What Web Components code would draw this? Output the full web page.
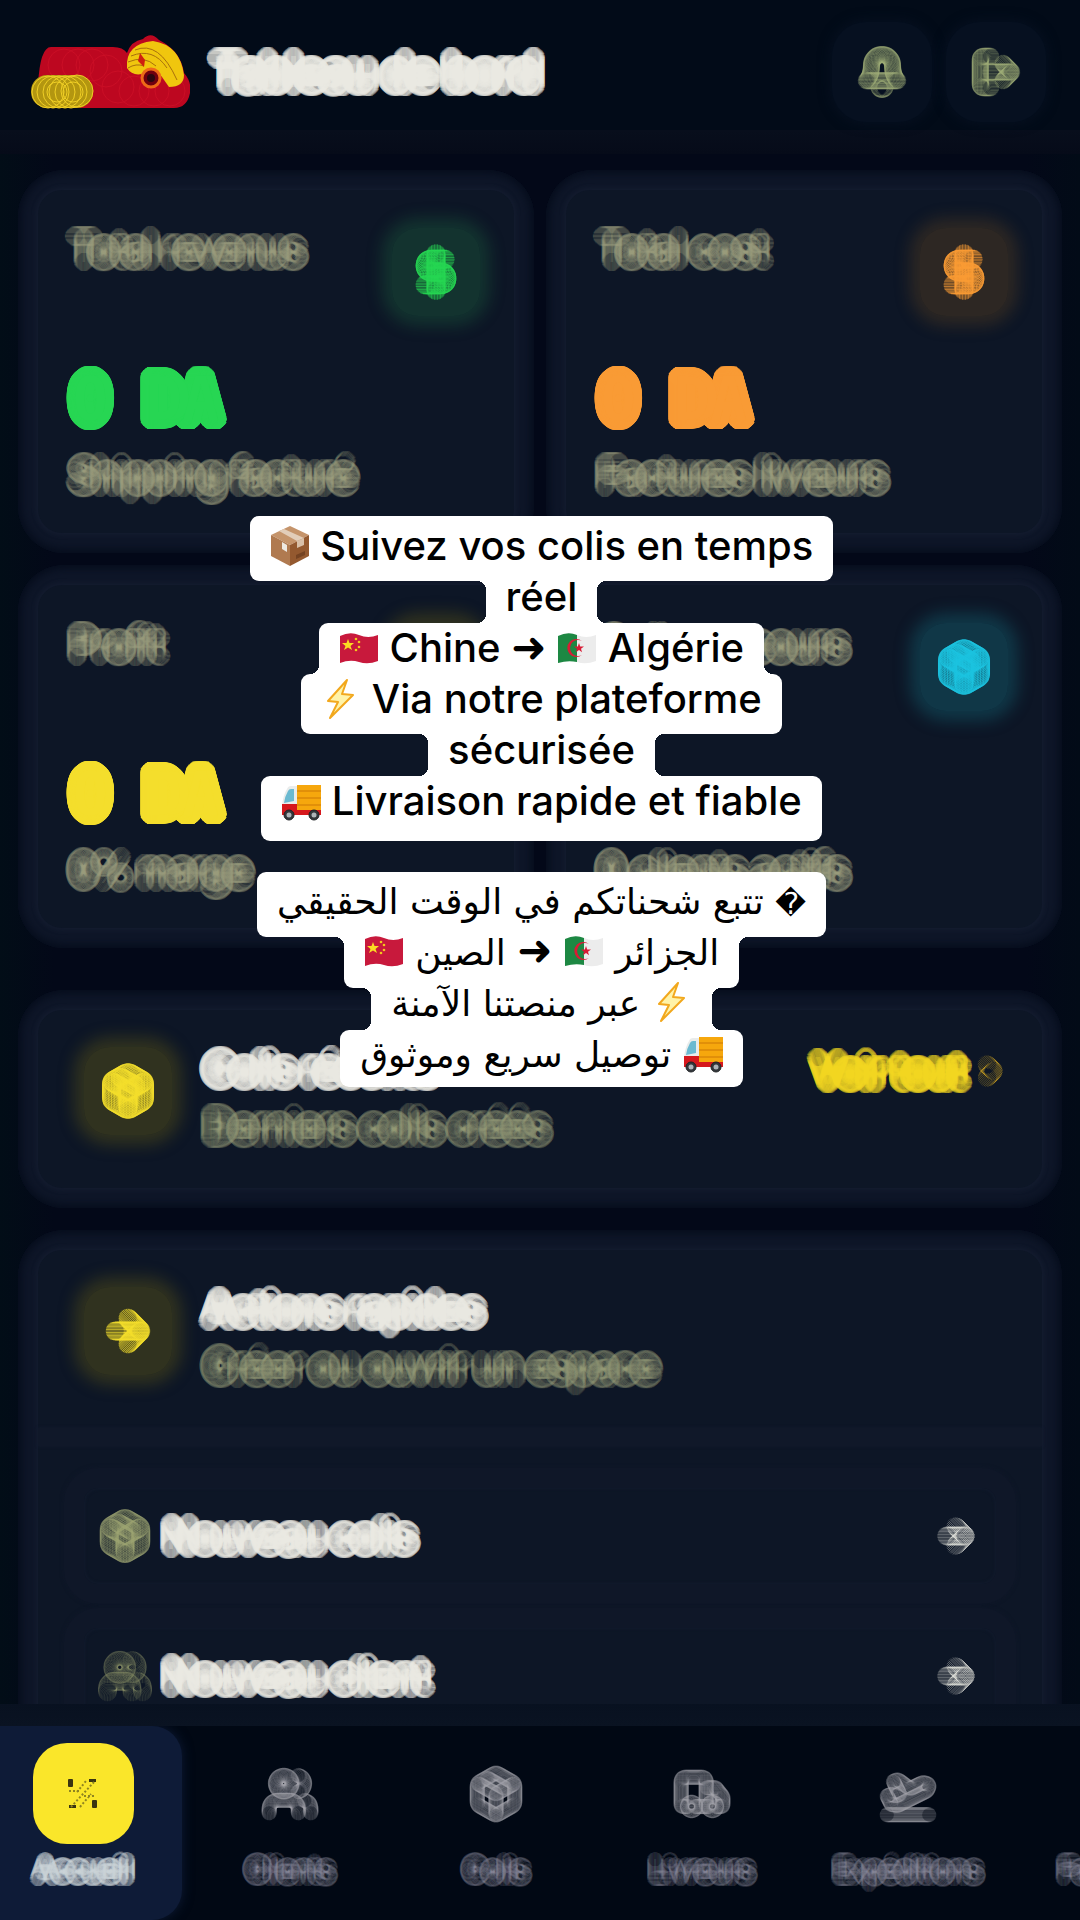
<!DOCTYPE html>
<html lang="fr">
<head>
<meta charset="utf-8">
<meta name="viewport" content="width=device-width, initial-scale=1">
<title>Tableau de bord</title>
<style>
  html, body { margin: 0; height: 100%; }
  body { background: #020a17; font-family: Inter, "Noto Sans", sans-serif; overflow: hidden; }
</style>
</head>
<body>
<dash-app></dash-app>
<script>
const ringOffsets = (radius, count) => Array.from({ length: count }, (_, i) => {
  const a = i * 2 * Math.PI / count;
  return [Math.round(Math.cos(a) * radius * 10) / 10, Math.round(Math.sin(a) * radius * 10) / 10];
});
const ringShadow = (radius, count) => ringOffsets(radius, count).map(([x, y]) => `${x}px ${y}px 0 currentColor`).join(',');
document.documentElement.style.setProperty('--ring', ringShadow(9, 40));
document.documentElement.style.setProperty('--ring-small', ringShadow(7, 32));

const define = (name, html) => customElements.define(name, class extends HTMLElement {
  constructor() {
    super();
    this.attachShadow({ mode: 'open' }).innerHTML = typeof html === 'function' ? html(this) : html;
  }
});

const ICONS = {
  dollar: '<path d="M12 2v20M17 5H9.500a3.500 3.500 0 0 0 0 7h5a3.500 3.500 0 0 1 0 7H6"/>',
  box: '<path d="M21 8a2 2 0 0 0-1-1.730l-7-4a2 2 0 0 0-2 0l-7 4A2 2 0 0 0 3 8v8a2 2 0 0 0 1 1.730l7 4a2 2 0 0 0 2 0l7-4A2 2 0 0 0 21 16ZM3.300 7l8.700 5 8.700-5M12 22V12M7.500 4.300l9 5.100"/>',
  bell: '<path d="M6 8a6 6 0 0 1 12 0c0 7 3 9 3 9H3s3-2 3-9M10.300 21a1.940 1.940 0 0 0 3.400 0"/>',
  logout: '<path d="M9 21H5a2 2 0 0 1-2-2V5a2 2 0 0 1 2-2h4M16 17l5-5-5-5M21 12H9"/>',
  arrow: '<path d="M5 12h14M12 5l7 7-7 7"/>',
  chevron: '<path d="M9 7l5 5-5 5"/>',
  users: '<circle cx="9" cy="7" r="4"/><path d="M16 21v-2a4 4 0 0 0-4-4H6a4 4 0 0 0-4 4v2M22 21v-2a4 4 0 0 0-3-3.870M16 3.130a4 4 0 0 1 0 7.750"/>',
  truck: '<path d="M14 18V6a2 2 0 0 0-2-2H4a2 2 0 0 0-2 2v11a1 1 0 0 0 1 1h2M15 18H9M19 18h2a1 1 0 0 0 1-1v-3.650L18.500 9H14"/><circle cx="17" cy="18" r="2"/><circle cx="7" cy="18" r="2"/>',
  plane: '<path d="M2 22h20M6.360 17.400L4 17l-2-4 1.100-.550a2 2 0 0 1 1.800 0l.170.100a2 2 0 0 0 1.800 0L8 12 5 6l.900-.450a2 2 0 0 1 2.090.200l4.020 3a2 2 0 0 0 2.100.200l4.190-2.060a2.400 2.400 0 0 1 1.730-.170L21 7a1.400 1.400 0 0 1 .870 1.990l-.380.760c-.230.460-.600.840-1.070 1.080L7.580 17.200a2 2 0 0 1-1.220.180Z"/>',
  card: '<rect x="2" y="5" width="20" height="14" rx="2"/><path d="M2 10h20"/>'
};
define('ring-icon', el => {
  const size = +el.getAttribute('size') || 44;
  const r = (+el.getAttribute('r') || 9) * 24 / size;
  const copies = ringOffsets(r, 36).map(([x, y]) => `<g transform="translate(${x} ${y})">${ICONS[el.getAttribute('name')]}</g>`).join('');
  return `<style>
    :host { display: block; flex: none; width: ${size}px; height: ${size}px; }
    svg { display: block; width: 100%; height: 100%; overflow: visible; fill: none; stroke: currentColor; stroke-width: .600; stroke-opacity: var(--line, 1); stroke-linecap: round; stroke-linejoin: round; }
  </style><svg viewBox="0 0 24 24" aria-hidden="true">${copies}</svg>`;
});

define('icon-tile', el => `<style>
  :host { display: grid; place-items: center; flex: none; width: 88px; height: 88px; border-radius: 26px;
    background: var(--tile); box-shadow: 0 0 16px 10px var(--tile); color: var(--ink); --line: .700; }
</style><ring-icon name="${el.getAttribute('name')}"></ring-icon>`);

define('glow-card', `<style>
  :host { display: block; box-sizing: border-box; padding: 20px; border-radius: 46px; background: #0e1628; box-shadow: inset 0 0 9px 3px #050c1b; }
  .in { height: 100%; box-sizing: border-box; border-radius: 24px; background: #0d1626; box-shadow: 0 0 4px 2px #141c2f; }
</style><div class="in"><slot></slot></div>`);

define('stat-card', el => `<style>
  :host { display: block; }
  .body { padding: 30px 34px 36px 34px; }
  .top { display: flex; justify-content: space-between; align-items: flex-start; height: 149px; }
  .muted { font-size: 37px; font-weight: 300; line-height: 44px; color: rgba(158,160,128,.2); text-shadow: var(--ring); white-space: nowrap; }
  .label { padding-top: 7px; }
  icon-tile { margin-top: 8px; }
  .value { font: 700 61px/60px "DejaVu Sans Mono", monospace; color: var(--ink); text-shadow: var(--ring); white-space: nowrap; padding-bottom: 24px; }
</style><glow-card><div class="body">
  <div class="top"><div class="muted label">${el.getAttribute('label')}</div><icon-tile name="${el.getAttribute('icon')}"></icon-tile></div>
  <div class="value">${el.getAttribute('value')}</div>
  <div class="muted">${el.getAttribute('note')}</div>
</div></glow-card>`);

define('app-header', `<style>
  :host { display: block; flex: none; }
  header { display: flex; align-items: center; height: 130px; padding: 28px 34px 14px 30px; box-sizing: border-box; background: #020b18; }
  .band { height: 24px; background: linear-gradient(#080e1c, #060b19); }
  .logo { width: 160px; height: 74px; flex: none; }
  h1 { flex: 1; margin: 0; padding-left: 24px; font-size: 42px; line-height: 48px; font-weight: 500; color: rgba(236,235,228,.4); text-shadow: var(--ring); white-space: nowrap; }
  button { display: grid; place-items: center; width: 100px; height: 100px; margin: 0 0 0 14px; padding: 0; border: 0; border-radius: 34px; background: #061020; box-shadow: 0 0 12px 2px #061020; color: rgba(160,175,120,.4); }
</style>
<header>
  <svg class="logo" viewBox="0 0 160 74" role="img" aria-label="Logo">
    <path d="M21 12h62q10 0 14 6 4-12 16-14 8-8 16 1 22 11 25 33 8 9 6 20-3 15-16 15H40Q16 74 8 50Q10 12 21 12Z" fill="#bd0720"/>
    <g fill="none" stroke="#d8162c" stroke-width="1" opacity=".5"><circle cx="34" cy="30" r="16"/><circle cx="48" cy="30" r="16"/><circle cx="62" cy="30" r="16"/><circle cx="76" cy="36" r="16"/><circle cx="88" cy="52" r="16"/><circle cx="104" cy="56" r="15"/><circle cx="124" cy="56" r="15"/><circle cx="140" cy="56" r="15"/></g>
    <path d="M97 33q-2-24 26-27 27 4 31 34 0 12-15 12l-7-10q-8-10-20-3-10 2-15-6Z" fill="#f0c60e"/>
    <g fill="none" stroke="#a8700c" stroke-width="1"><path d="M105 15q24-10 42 30M101 21q22-9 36 12M98 27q16-7 28 4M98 33q8-5 16-2"/></g>
    <circle cx="121" cy="43" r="9" fill="#70000f" stroke="#ee6a18" stroke-width="3"/>
    <circle cx="121" cy="43" r="4" fill="#2a0710"/>
    <path d="m110 18 5 7-1 7-6-6Z" fill="#cf2010"/>
    <rect x="1" y="40" width="62" height="33" rx="16" fill="#b39610"/>
    <g fill="none" stroke="#f0cf25" stroke-width="1"><circle cx="18" cy="57" r="16"/><circle cx="23" cy="57" r="16"/><circle cx="29" cy="57" r="16"/><circle cx="35" cy="57" r="16"/><circle cx="41" cy="57" r="16"/><circle cx="47" cy="56" r="16"/><circle cx="27" cy="57" r="10"/><circle cx="43" cy="57" r="10"/></g>
  </svg>
  <h1>Tableau de bord</h1>
  <button aria-label="Notifications"><ring-icon name="bell" size="42" r="8"></ring-icon></button>
  <button aria-label="Déconnexion"><ring-icon name="logout" size="42" r="8"></ring-icon></button>
</header><div class="band"></div>`);

define('section-head', el => `<style>
  :host { display: flex; align-items: center; padding: 37px 36px 53px 46px; gap: 34px; }
  .txt { flex: 1; white-space: nowrap; margin: -7px 0 -19px; }
  h2 { margin: 0; font-size: 37px; line-height: 57px; font-weight: 500; color: rgba(236,235,228,.32); text-shadow: var(--ring); }
  p { margin: 0; font-size: 37px; font-weight: 300; line-height: 57px; color: rgba(152,158,122,.18); text-shadow: var(--ring); }
</style><icon-tile name="${el.getAttribute('icon')}"></icon-tile>
<div class="txt"><h2>${el.getAttribute('heading')}</h2><p>${el.getAttribute('note')}</p></div><slot></slot>`);

define('more-link', `<style>
  :host { display: block; align-self: flex-start; }
  a { display: flex; align-items: center; gap: 12px; font-size: 37px; line-height: 48px; font-weight: 500; text-decoration: none; white-space: nowrap; color: rgba(244,216,32,.36); text-shadow: var(--ring); }
  ring-icon { color: rgba(244,190,32,.4); }
</style><a href="#colis"><slot></slot><ring-icon name="chevron" size="30" r="9"></ring-icon></a>`);

define('action-row', el => `<style>
  :host { display: block; }
  button { display: flex; align-items: center; width: 100%; height: 136px; box-sizing: border-box; padding: 0 24px 0 20px; border: 20px solid #0f1728; border-radius: 34px; background: #0d1626; box-shadow: 0 0 4px #101829, inset 0 0 3px 1px #121b2d; font: 400 37px/48px Inter, sans-serif; color: rgba(236,235,228,.34); text-shadow: var(--ring); text-align: left; }
  span { flex: 1; padding-left: 20px; white-space: nowrap; }
  .lead { color: rgba(158,164,114,${el.getAttribute('dim') || '.4'}); }
  .go { color: rgba(236,235,228,.5); }
</style><button><ring-icon class="lead" name="${el.getAttribute('icon')}" size="42"></ring-icon><span><slot></slot></span><ring-icon class="go" name="arrow" size="32"></ring-icon></button>`);

define('nav-item', el => {
  const active = el.hasAttribute('active');
  return `<style>
  :host { display: block; flex: none; width: 206px; }
  a { display: flex; flex-direction: column; align-items: center; height: 194px; box-sizing: border-box; padding-top: 17px; font-size: 27px; line-height: 34px; font-weight: 300; text-decoration: none; white-space: nowrap; text-shadow: var(--ring-small); color: rgba(140,140,158,.18); }
  .ico { display: grid; place-items: center; width: 101px; height: 101px; margin-bottom: 9px; }
  a.on { width: 182px; padding-right: 16px; background: #0e1b37; box-shadow: 0 0 12px #0e1b37; border-radius: 0 30px 30px 0; font-weight: 400; color: rgba(205,214,218,.3); }
  .on .ico { border-radius: 34px; background: #fae62a; text-shadow: none; }
  .ico svg { width: 32px; height: 32px; }
  ring-icon { color: rgba(165,165,172,.26); }
</style><a class="${active ? 'on' : ''}" href="#${el.getAttribute('icon')}"><span class="ico">${active
    ? '<svg viewBox="0 0 32 32" aria-hidden="true"><g fill="#3a3510"><rect x="1" y="1" width="5" height="8" rx="1"/><rect x="25" y="22" width="5" height="8" rx="1"/><rect x="22" y="1" width="7" height="3"/><rect x="2" y="27" width="7" height="3"/></g><path d="M4 29 27 4M10 14l9-11M13 29l11-13M2 13h12M17 18h12" stroke="#8f8420" stroke-width="2" stroke-dasharray="2 2" fill="none"/></svg>'
    : `<ring-icon name="${el.getAttribute('icon')}" size="50" r="7"></ring-icon>`}</span><slot></slot></a>`;
});

define('bottom-nav', `<style>
  :host { display: block; flex: none; }
  .band { height: 22px; background: linear-gradient(#081120, #0a1322); }
  nav { display: flex; height: 194px; background: #010814; overflow: hidden; }
  nav-item[active] { width: 187px; }
</style><div class="band"></div><nav>
  <nav-item icon="home" active>Accueil</nav-item>
  <nav-item icon="users">Clients</nav-item>
  <nav-item icon="box">Colis</nav-item>
  <nav-item icon="truck">Livreurs</nav-item>
  <nav-item icon="plane">Expéditions</nav-item>
  <nav-item icon="card">Factures</nav-item>
</nav>`);

const flagShape = 'M1 5Q11 0 20 4T39 4V30Q29 34 20 31T1 32Z';
const EMOJI = {
  parcel: '<path d="m20 1 19 9-19 10L1 10Z" fill="#c5946b"/><path d="m1 10 19 10v21L1 31Z" fill="#b07a50"/><path d="m39 10-19 10v21l19-10Z" fill="#94592f"/><path d="m9 6 18 10 7-3L14 4Z" fill="#e2cdb9"/><path d="M27 16v7l7-3v-7Z" fill="#d9c0a8"/><path d="m12 17 5 3v7l-5-3Z" fill="#eee9e2"/><path d="m26 30 9-4v4l-9 4Z" fill="#754322"/>',
  cn: `<path d="${flagShape}" fill="#c8193c"/><path d="m9 8 1.500 4H15l-3.500 3 1.500 4-4-2.500L5 19l1.500-4L3 12h4.500Z" fill="#fbdc22"/><g fill="#f3c81d"><circle cx="17" cy="8" r="1.300"/><circle cx="20" cy="11" r="1.300"/><circle cx="20" cy="16" r="1.300"/><circle cx="17" cy="19" r="1.300"/></g>`,
  dz: `<path d="${flagShape}" fill="#ececec"/><path d="M1 5Q11 0 20 4V31Q11 29 1 32Z" fill="#1d8843"/><path d="M25 10a8 8 0 1 0 0 14 9 9 0 1 1 0-14Z" fill="#d81c35"/><path d="m22 12 1.200 3.500H27l-3 2.200 1 3.600-3-2.200-3 2.200 1-3.600-3-2.200h3.800Z" fill="#d81c35"/>`,
  bolt: '<path d="M26 2 7 23l10 1L9 40l23-23-11-1Z" fill="#fff3a8" stroke="#f2a81d" stroke-width="2" stroke-linejoin="round"/>',
  truck: '<path d="M16 5h24v26H16Z" fill="#f6a70d"/><path d="M16 11h24M16 18h24M16 25h24" stroke="#cd7807" stroke-width="1"/><path d="M6 9q1-3 4-3h6v20H1Q2 15 6 9Z" fill="#e9eceb"/><path d="M7 11q1-2 3-2h3v12l-10 2Q4 16 7 11Z" fill="#6bbad1"/><path d="M1 24h15v6h24v5H1Z" fill="#d6181d"/><g fill="#33373b" stroke="#202326"><circle cx="8" cy="35" r="5"/><circle cx="33" cy="35" r="5"/></g><g fill="#aeb4b8"><circle cx="8" cy="35" r="2.500"/><circle cx="33" cy="35" r="2.500"/></g>'
};
define('emo-ji', el => {
  const name = el.getAttribute('name');
  const flag = name === 'cn' || name === 'dz';
  return `<style>
  :host { display: inline-block; width: 40px; height: 42px; vertical-align: -7px; }
  svg { display: block; width: 100%; height: 100%; }
</style><svg viewBox="0 0 40 42" aria-hidden="true"><g transform="translate(0 ${flag ? 4 : 0})">${EMOJI[name]}</g></svg>`;
});

define('caption-line', `<style>
  :host { display: block; position: relative; height: 51px; padding: 0 20px 9px; border-radius: 9px; margin-bottom: -9px; background: #fff; color: #000; font-size: 40px; line-height: 50px; font-weight: 500; white-space: nowrap; }
  :host([first]) { padding-top: 5px; }
  :host([last]) { padding-bottom: 14px; margin-bottom: 0; }
  :host([dir=rtl]) { font: 400 36px/50px "DejaVu Sans", sans-serif; }
  :host([dir=rtl][last]) { padding-bottom: 6px; }
  :host([notch])::before, :host([notch])::after { content: ""; position: absolute; top: 9px; bottom: 9px; width: 9px;
    background: var(--up, linear-gradient(transparent, transparent)) top / 9px 9px no-repeat, var(--down, linear-gradient(transparent, transparent)) bottom / 9px 9px no-repeat; }
  :host([notch])::before { left: -9px; transform: scaleX(-1); }
  :host([notch])::after { right: -9px; }
  :host([notch~=up]) { --up: radial-gradient(circle at 9px 9px, transparent 9px, #fff 9px); }
  :host([notch~=down]) { --down: radial-gradient(circle at 9px 0, transparent 9px, #fff 9px); }
</style><slot></slot>`);

define('caption-block', `<style>
  :host { display: flex; flex-direction: column; align-items: center; }
</style><slot></slot>`);

define('dash-app', `<style>
  :host { display: flex; flex-direction: column; position: relative; height: 100vh; overflow: hidden; background: linear-gradient(90deg, #020d17, #030818 5%, #030818 95%, #020b17); }
  main { flex: 1; min-height: 0; overflow: hidden; padding: 16px 18px 0; }
  .stats { display: grid; grid-template-columns: 1fr 1fr; gap: 12px; margin-bottom: 42px; }
  .recent { margin-bottom: 22px; }
  .green { --ink: #27d653; --tile: rgba(34,120,70,.3); }
  .orange { --ink: #f99b35; --tile: rgba(120,80,30,.3); }
  .gold { --ink: #f4de2c; --tile: rgba(110,100,20,.36); }
  .cyan { --ink: #1dc3df; --tile: rgba(20,110,125,.38); }
  .rule { height: 18px; background: #101829; box-shadow: 0 0 3px #141c2f; }
  .rows { display: grid; gap: 4px; padding: 22px 26px; }
  .captions { position: absolute; inset: 516px 0 auto 3px; display: grid; gap: 31px; }
  b { font: 700 42px/40px "DejaVu Sans", sans-serif; }
  i { font: 400 30px/40px "DejaVu Sans", sans-serif; }
</style>
<app-header></app-header>
<main>
  <div class="stats">
    <stat-card class="green" label="Total revenus" icon="dollar" value="0 DA" note="Shipping facturé"></stat-card>
    <stat-card class="orange" label="Total cost" icon="dollar" value="0 DA" note="Factures livreurs"></stat-card>
    <stat-card class="gold" label="Profit" icon="dollar" value="0 DA" note="0% marge"></stat-card>
    <stat-card class="cyan" label="Colis en cours" icon="box" value="0" note="0 clients actifs"></stat-card>
  </div>
  <glow-card class="recent gold"><section-head icon="box" heading="Colis récents" note="Derniers colis créés"><more-link>Voir tout</more-link></section-head></glow-card>
  <glow-card class="gold"><section-head icon="arrow" heading="Actions rapides" note="Créer ou ouvrir un espace"></section-head>
    <div class="rule"></div>
    <div class="rows"><action-row icon="box">Nouveau colis</action-row><action-row icon="users" dim=".18">Nouveau client</action-row></div>
  </glow-card>
</main>
<bottom-nav></bottom-nav>
<div class="captions">
  <caption-block>
    <caption-line first><emo-ji name="parcel"></emo-ji> Suivez vos colis en temps</caption-line>
    <caption-line notch="up down">réel</caption-line>
    <caption-line notch="down"><emo-ji name="cn"></emo-ji> Chine <b>➜</b> <emo-ji name="dz"></emo-ji> Algérie</caption-line>
    <caption-line><emo-ji name="bolt"></emo-ji> Via notre plateforme</caption-line>
    <caption-line notch="up down">sécurisée</caption-line>
    <caption-line last><emo-ji name="truck"></emo-ji> Livraison rapide et fiable</caption-line>
  </caption-block>
  <caption-block lang="ar">
    <caption-line dir="rtl" first><i>�</i> تتبع شحناتكم في الوقت الحقيقي</caption-line>
    <caption-line dir="rtl" notch="up">الجزائر <emo-ji name="dz"></emo-ji> <b>➜</b> الصين <emo-ji name="cn"></emo-ji></caption-line>
    <caption-line dir="rtl" notch="up down"><emo-ji name="bolt"></emo-ji> عبر منصتنا الآمنة</caption-line>
    <caption-line dir="rtl" last><emo-ji name="truck"></emo-ji> توصيل سريع وموثوق</caption-line>
  </caption-block>
</div>`);
</script>
</body>
</html>
